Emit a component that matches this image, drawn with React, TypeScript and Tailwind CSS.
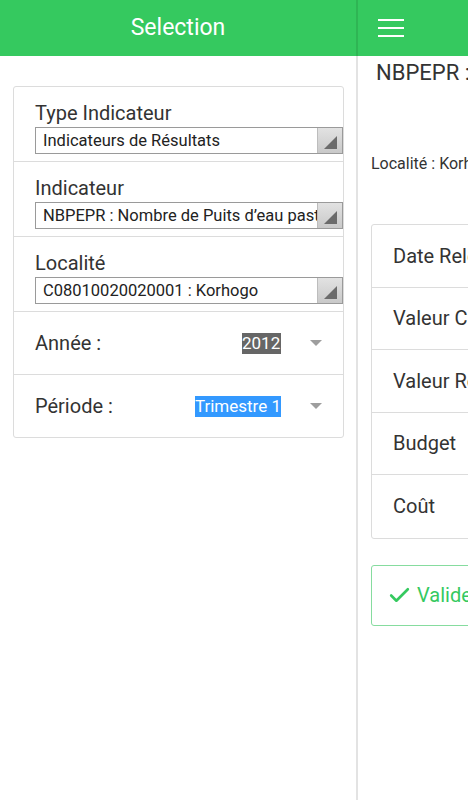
import { Check } from "lucide-react";

const font = { fontFamily: "Roboto, 'Noto Sans', sans-serif" };

function SelectBox({ value }: { value: string }) {
  return (
    <div className="flex h-[27px] items-stretch border border-[#9a9a9a] bg-white">
      <div className="flex-1 overflow-hidden whitespace-nowrap pl-[7px] text-[16.5px] leading-[25px] text-[#222]">
        {value}
      </div>
      <div className="relative w-[25px] border-l border-[#bdbdbd] bg-gradient-to-b from-[#e2e2e2] to-[#c9c9c9]">
        <svg className="absolute bottom-[4px] right-[5px]" width="13" height="13" viewBox="0 0 13 13">
          <polygon points="13,0 13,13 0,13" fill="#6b6b6b" />
        </svg>
      </div>
    </div>
  );
}

function FieldRow({ label, value }: { label: string; value: string }) {
  return (
    <div className="flex h-[75px] flex-col justify-end border-b border-[#dcdcdc] pb-[7px] pl-[21px]">
      <div className="mb-[1px] text-[20px] leading-[26px] text-[#333]">{label}</div>
      <SelectBox value={value} />
    </div>
  );
}

function Caret() {
  return (
    <svg width="12" height="6" viewBox="0 0 12 6">
      <polygon points="0,0 12,0 6,6" fill="#9e9e9e" />
    </svg>
  );
}

export default function App() {
  return (
    <div className="flex h-[800px] w-[468px] overflow-hidden bg-white" style={font}>
      {/* left panel */}
      <div className="flex w-[356px] shrink-0 flex-col">
        <div className="flex h-[56px] items-center justify-center bg-[#35c95f] text-[23px] text-white">
          Selection
        </div>
        <div className="ml-[13px] mt-[30px] w-[331px] rounded-[3px] border border-[#dcdcdc] bg-white">
          <FieldRow label="Type Indicateur" value="Indicateurs de Résultats" />
          <FieldRow label="Indicateur" value="NBPEPR : Nombre de Puits d’eau pastoraux" />
          <FieldRow label="Localité" value="C08010020020001 : Korhogo" />
          <div className="flex h-[63px] items-center border-b border-[#dcdcdc] pl-[21px]">
            <span className="flex-1 text-[20px] text-[#333]">Année :</span>
            <span className="w-[39px] overflow-hidden whitespace-nowrap bg-[#666] text-[17px] leading-[21px] text-white">
              2012
            </span>
            <span className="ml-[29px] mr-[21px] flex">
              <Caret />
            </span>
          </div>
          <div className="flex h-[62px] items-center pl-[21px]">
            <span className="flex-1 text-[20px] text-[#333]">Période :</span>
            <span className="whitespace-nowrap bg-[#3399ff] text-[17px] leading-[21px] text-white">
              Trimestre 1
            </span>
            <span className="ml-[29px] mr-[21px] flex">
              <Caret />
            </span>
          </div>
        </div>
      </div>

      {/* divider */}
      <div className="flex w-[2px] shrink-0 flex-col">
        <div className="h-[56px] bg-[#2fb554]" />
        <div className="flex-1 bg-[#e3e3e3]" />
      </div>

      {/* right panel */}
      <div className="flex w-[320px] shrink-0 flex-col">
        <div className="flex h-[56px] items-center bg-[#35c95f] pl-[20px]">
          <div className="flex w-[26px] flex-col gap-[6px]">
            <div className="h-[2px] bg-white" />
            <div className="h-[2px] bg-white" />
            <div className="h-[2px] bg-white" />
          </div>
        </div>
        <div className="whitespace-nowrap pl-[18px] pt-[4px] text-[22px] leading-[26px] text-[#333]">
          NBPEPR : Nombre de Puits d’eau pastoraux
        </div>
        <div className="whitespace-nowrap pl-[13px] pt-[68px] text-[16px] leading-[20px] text-[#333]">
          Localité : Korhogo
        </div>
        <div className="ml-[13px] mt-[50px] rounded-[3px] border border-[#dcdcdc]">
          {["Date Relevé", "Valeur Cible", "Valeur Réalisée", "Budget", "Coût"].map((t, i) => (
            <div
              key={t}
              className={`flex h-[62.5px] items-center whitespace-nowrap pl-[21px] text-[20px] text-[#333] ${
                i < 4 ? "border-b border-[#dcdcdc]" : ""
              }`}
            >
              {t}
            </div>
          ))}
        </div>
        <div className="ml-[13px] mt-[26px] flex h-[61px] items-center whitespace-nowrap rounded-[3px] border border-[#86dc9f] pl-[15px] text-[20px] text-[#35c95f]">
          <Check size={25} strokeWidth={2.5} className="mr-[5px]" />
          Valider
        </div>
      </div>
    </div>
  );
}
